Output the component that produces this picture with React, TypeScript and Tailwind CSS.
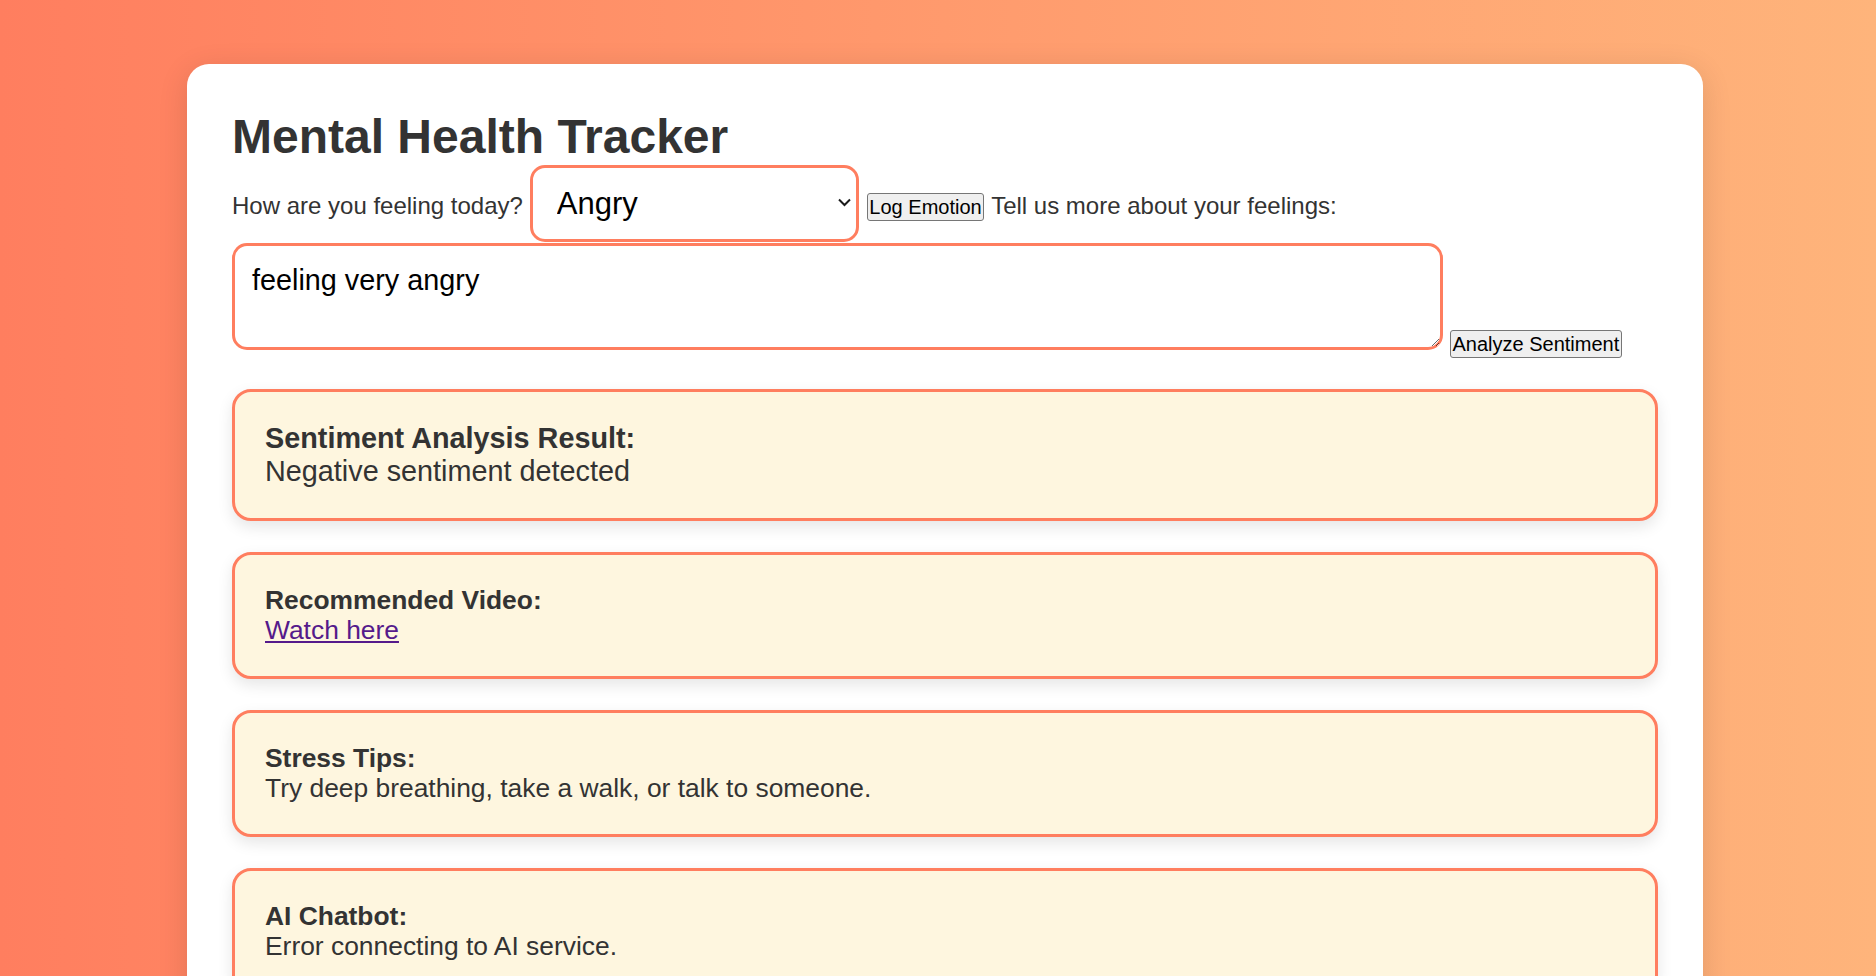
import React from "react";

const cards = [
  {
    title: "Sentiment Analysis Result:",
    body: "Negative sentiment detected",
    size: "text-[28.8px] leading-[32.7px]",
  },
  {
    title: "Recommended Video:",
    link: "Watch here",
    size: "text-[26.4px] leading-[30.5px]",
  },
  {
    title: "Stress Tips:",
    body: "Try deep breathing, take a walk, or talk to someone.",
    size: "text-[26.4px] leading-[30.5px]",
  },
  {
    title: "AI Chatbot:",
    body: "Error connecting to AI service.",
    size: "text-[26.4px] leading-[30.5px]",
  },
];

export default function App() {
  return (
    <div className="min-h-screen bg-linear-to-r from-[#ff7e5f] to-[#feb47b] pt-[64px] pb-[60px] font-['Liberation_Sans',Arial,sans-serif] text-[#333]">
      <div className="ml-[187px] w-[1516px] rounded-[22px] bg-white px-[45px] pt-[45px] pb-[45px] shadow-[0_6px_30px_rgba(0,0,0,0.12)]">
        <h1 className="text-[48px] font-bold leading-[55.2px]">
          Mental Health Tracker
        </h1>

        {/* emotion row */}
        <div className="mt-[1px] flex items-baseline text-[24px] leading-[27.6px]">
          <label htmlFor="emotion">How are you feeling today?</label>
          <div className="relative ml-[7px]">
            <select
              id="emotion"
              defaultValue="Angry"
              className="h-[77px] w-[329px] appearance-none rounded-[15px] border-[3px] border-[#ff7e5f] bg-white pl-[24px] text-[31px] leading-[36px] text-black outline-none"
            >
              <option>Happy</option>
              <option>Sad</option>
              <option>Angry</option>
              <option>Anxious</option>
              <option>Calm</option>
            </select>
            <svg
              className="pointer-events-none absolute left-[308px] top-[33px]"
              width="13"
              height="9"
              viewBox="0 0 13 9"
              fill="none"
            >
              <path
                d="M1 1.5 L6.5 7 L12 1.5"
                stroke="#1a1a1a"
                strokeWidth="2"
              />
            </svg>
          </div>
          <button className="ml-[8px] rounded-[3px] border border-[#767676] bg-[#efefef] px-[1.5px] py-[1.5px] text-[20px] leading-[23px] text-black">
            Log Emotion
          </button>
          <span className="ml-[7px]">Tell us more about your feelings:</span>
        </div>

        {/* feelings row */}
        <div className="mt-[1px] flex items-start">
          <textarea
            defaultValue="feeling very angry"
            className="h-[107px] w-[1211px] rounded-[15px] border-[3px] border-[#ff7e5f] bg-white pl-[17px] pr-[16px] pt-[18px] pb-[14px] text-[28.8px] leading-[33px] text-black outline-none"
          />
          <button className="ml-[7px] mt-[87px] rounded-[3px] border border-[#767676] bg-[#efefef] px-[1.5px] py-[1.5px] text-[20px] leading-[23px] text-black">
            Analyze Sentiment
          </button>
        </div>

        {/* results */}
        <div className="mt-[31px] flex flex-col gap-[31px]">
          {cards.map((card) => (
            <div
              key={card.title}
              className={`rounded-[19px] border-[3px] border-[#ff7e5f] bg-[#fef6df] p-[30px] shadow-[0_6px_15px_rgba(0,0,0,0.1)] ${card.size}`}
            >
              <strong className="block font-bold">{card.title}</strong>
              {card.link ? (
                <a href="#" className="text-[#551a8b] underline">
                  {card.link}
                </a>
              ) : (
                <p>{card.body}</p>
              )}
            </div>
          ))}
        </div>
      </div>
    </div>
  );
}
